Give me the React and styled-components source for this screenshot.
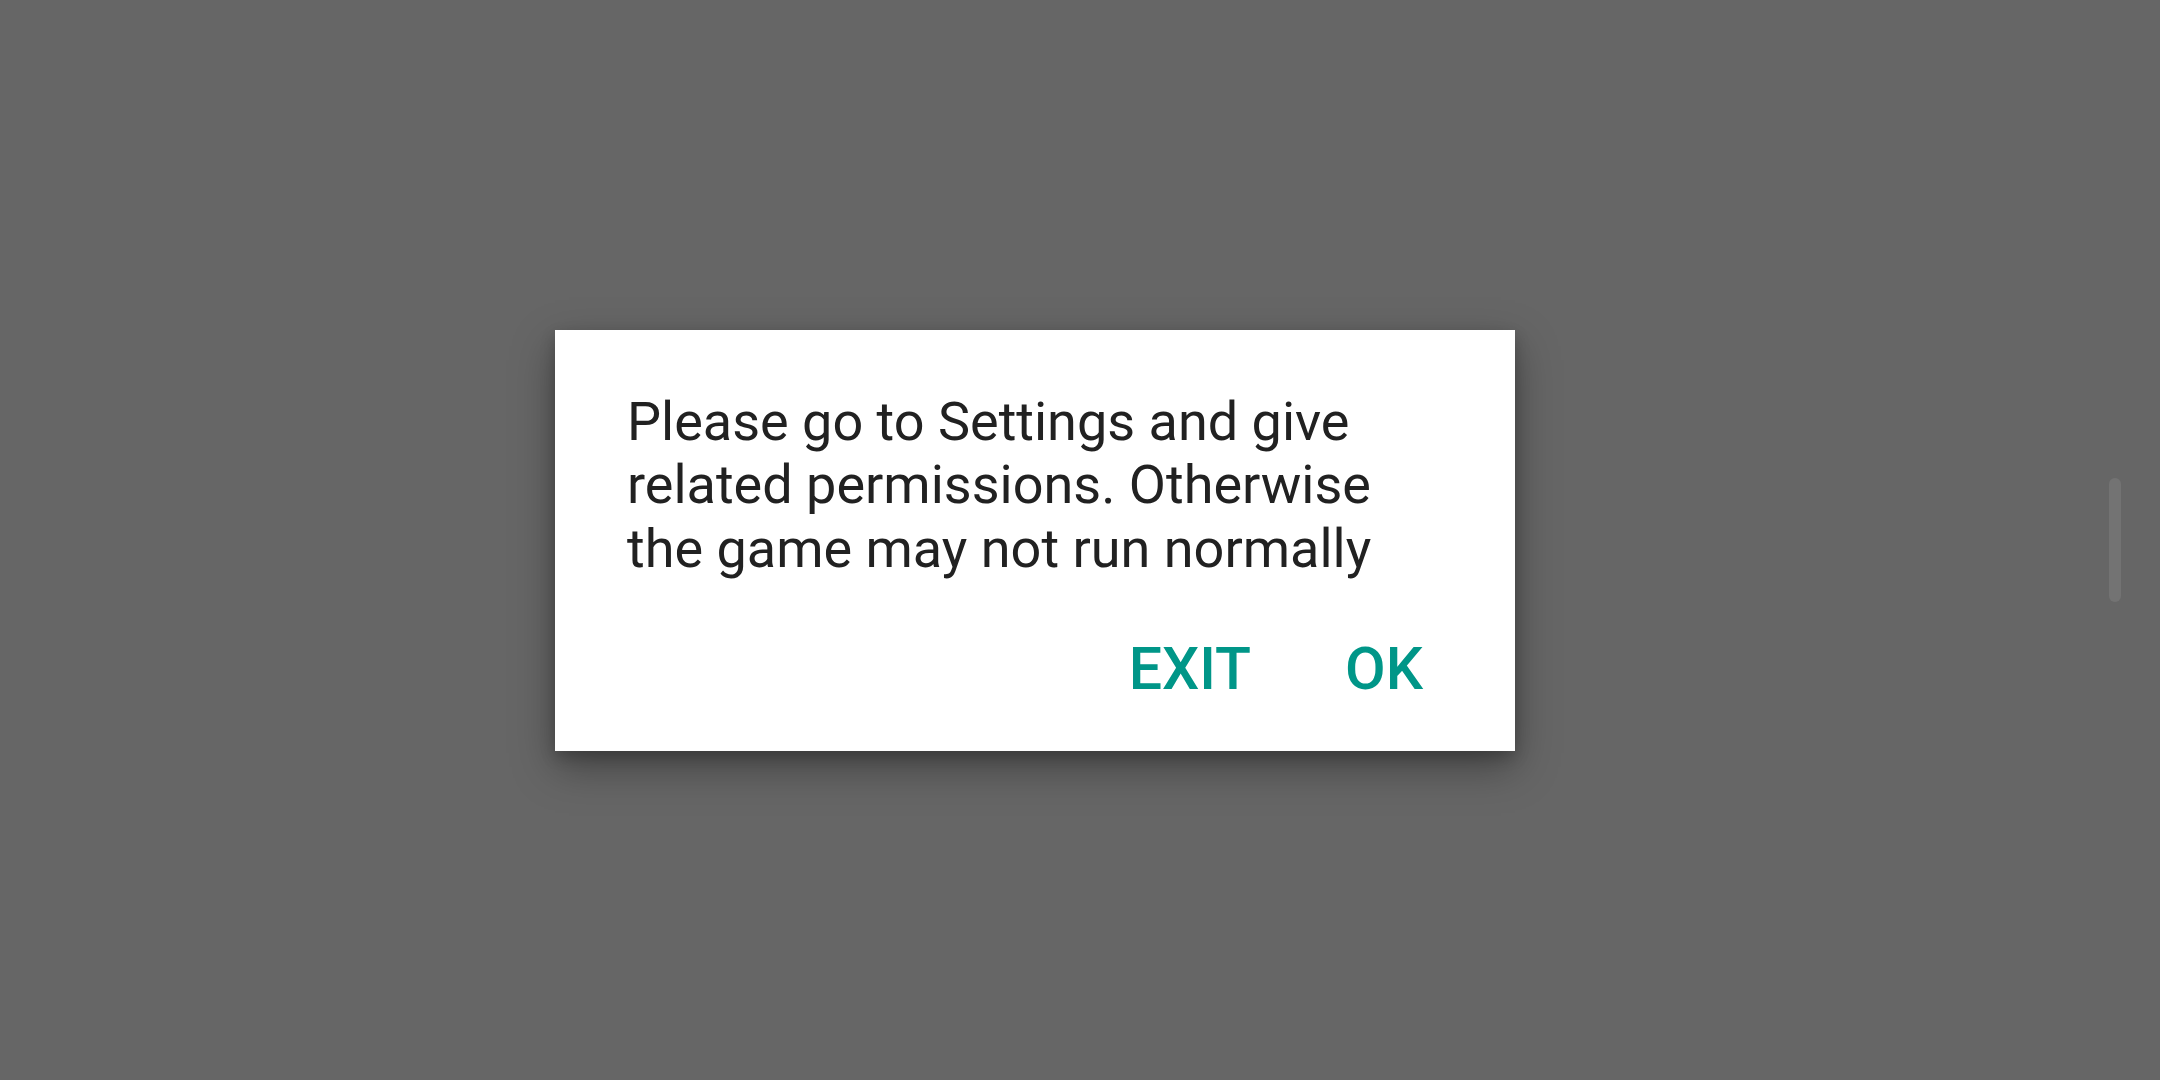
import React from "react";
import styled, { createGlobalStyle } from "styled-components";

const Global = createGlobalStyle`
  html, body { margin: 0; padding: 0; height: 100%; }
  body { background: #666666; font-family: Roboto, "Noto Sans", sans-serif; }
  #root { height: 100%; }
`;

const Screen = styled.div`
  display: flex;
  width: 2160px;
  height: 1080px;
  background: #666666;
`;

const Stage = styled.main`
  flex: 1;
  display: flex;
  align-items: center;
  justify-content: center;
`;

const Rail = styled.aside`
  width: 90px;
  display: flex;
  align-items: flex-start;
  padding-top: 478px;
  padding-left: 39px;
  box-sizing: border-box;
`;

const Thumb = styled.div`
  width: 12px;
  height: 124px;
  border-radius: 6px;
  background: #737373;
`;

const Dialog = styled.div`
  width: 960px;
  height: 421px;
  box-sizing: border-box;
  background: #ffffff;
  padding: 60px 72px 0 72px;
  box-shadow: 0 16px 40px rgba(0, 0, 0, 0.35), 0 6px 14px rgba(0, 0, 0, 0.2);
  display: flex;
  flex-direction: column;
`;

const Message = styled.p`
  margin: 0;
  font-size: 54px;
  line-height: 63.5px;
  color: #212121;
  font-weight: 400;
`;

const Actions = styled.div`
  display: flex;
  justify-content: flex-end;
  gap: 94px;
  margin-top: 59px;
  padding-right: 20px;
`;

const Action = styled.button`
  border: none;
  background: none;
  padding: 0;
  font-family: Roboto, "Noto Sans", sans-serif;
  font-weight: 500;
  font-size: 59px;
  line-height: 60px;
  color: #009688;
  cursor: pointer;
`;

export default function App() {
  return (
    <>
      <Global />
      <Screen>
        <Stage>
          <Dialog>
            <Message>
              Please go to Settings and give
              <br />
              related permissions. Otherwise
              <br />
              the game may not run normally
            </Message>
            <Actions>
              <Action>EXIT</Action>
              <Action>OK</Action>
            </Actions>
          </Dialog>
        </Stage>
        <Rail>
          <Thumb />
        </Rail>
      </Screen>
    </>
  );
}
